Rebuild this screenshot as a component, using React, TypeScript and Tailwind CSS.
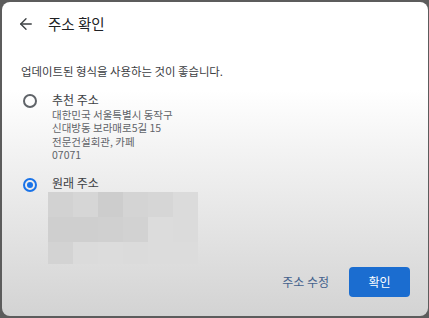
import React, { useState } from 'react';
import { ArrowLeft } from 'lucide-react';

const suggested = ['대한민국 서울특별시 동작구', '신대방동 보라매로5길 15', '전문건설회관, 카페', '07071'];

// blurred (pixelated) original address
const mosaic = [
  ['#d2d2d2', '#d6d6d6', '#cdcdcd', '#d4d4d4', '#d6d6d6', '#dbdbdb'],
  ['#cfcfcf', '#cfcfcf', '#d0d0d0', '#d2d2d2', '#dcdcdc', '#dbdbdb'],
  ['#d3d3d3', '#dbdbdb', '#dcdcdc', '#dbdbdb', '#dcdcdc', '#dcdcdc'],
];

const Radio = ({ checked }: { checked: boolean }) => (
  <span
    className={`w-[14px] h-[14px] rounded-full border-2 flex items-center justify-center shrink-0 ${
      checked ? 'border-[#1a73e8]' : 'border-[#5f6368]'
    }`}
  >
    {checked && <span className="w-[6px] h-[6px] rounded-full bg-[#1a73e8]" />}
  </span>
);

const App: React.FC = () => {
  const [choice, setChoice] = useState<'suggested' | 'original'>('original');

  return (
    <div
      className="w-[429px] h-[318px] bg-[#5c5c5c] pt-[2px] pl-[2px] overflow-hidden"
      style={{ fontFamily: '"Noto Sans CJK KR", "Noto Sans", sans-serif' }}
    >
      <div className="w-[426px] h-[314px] rounded-[8px] bg-linear-to-b from-white from-[28%] to-[#d3d3d3] flex flex-col">
        {/* Header */}
        <div className="h-[28px] mt-[8px] flex items-center pl-[15px]">
          <ArrowLeft className="w-[18px] h-[18px] text-[#3c4043]" strokeWidth={1.8} />
          <h1 className="ml-[13px] text-[14.5px] leading-[20px] text-[#202124]">주소 확인</h1>
        </div>

        <p className="mt-[25px] pl-[19px] text-[11.4px] leading-[16px] text-[#3c4043]">
          업데이트된 형식을 사용하는 것이 좋습니다.
        </p>

        {/* Suggested */}
        <button
          onClick={() => setChoice('suggested')}
          className="mt-[13px] flex items-start text-left pl-[21px]"
        >
          <span className="pt-[2px]">
            <Radio checked={choice === 'suggested'} />
          </span>
          <span className="ml-[15px] flex flex-col">
            <span className="text-[12px] leading-[16px] text-[#3c4043]">추천 주소</span>
            {suggested.map(line => (
              <span key={line} className="text-[10.5px] leading-[13.4px] text-[#5f6368]">
                {line}
              </span>
            ))}
          </span>
        </button>

        {/* Original */}
        <button
          onClick={() => setChoice('original')}
          className="mt-[15px] flex items-start text-left pl-[21px]"
        >
          <span className="pt-[1px]">
            <Radio checked={choice === 'original'} />
          </span>
          <span className="ml-[15px] flex flex-col">
            <span className="text-[12px] leading-[12px] text-[#3c4043]">원래 주소</span>
          </span>
        </button>

        <div className="ml-[46px] flex flex-col">
          {mosaic.map((row, r) => (
            <div key={r} className={`flex ${r === 2 ? 'h-[22px]' : 'h-[25px]'}`}>
              {row.map((c, i) => (
                <div key={i} className="w-[25px] h-full" style={{ backgroundColor: c }} />
              ))}
            </div>
          ))}
        </div>

        {/* Footer */}
        <div className="mt-auto mb-[19px] flex items-center justify-end pr-[18px] gap-[18px]">
          <button className="text-[12px] leading-[16px] text-[#44618c] px-[2px]">주소 수정</button>
          <button className="w-[61px] h-[30px] rounded-[4px] bg-[#1b6dd0] text-white text-[12px]">
            확인
          </button>
        </div>
      </div>
    </div>
  );
};

export default App;
